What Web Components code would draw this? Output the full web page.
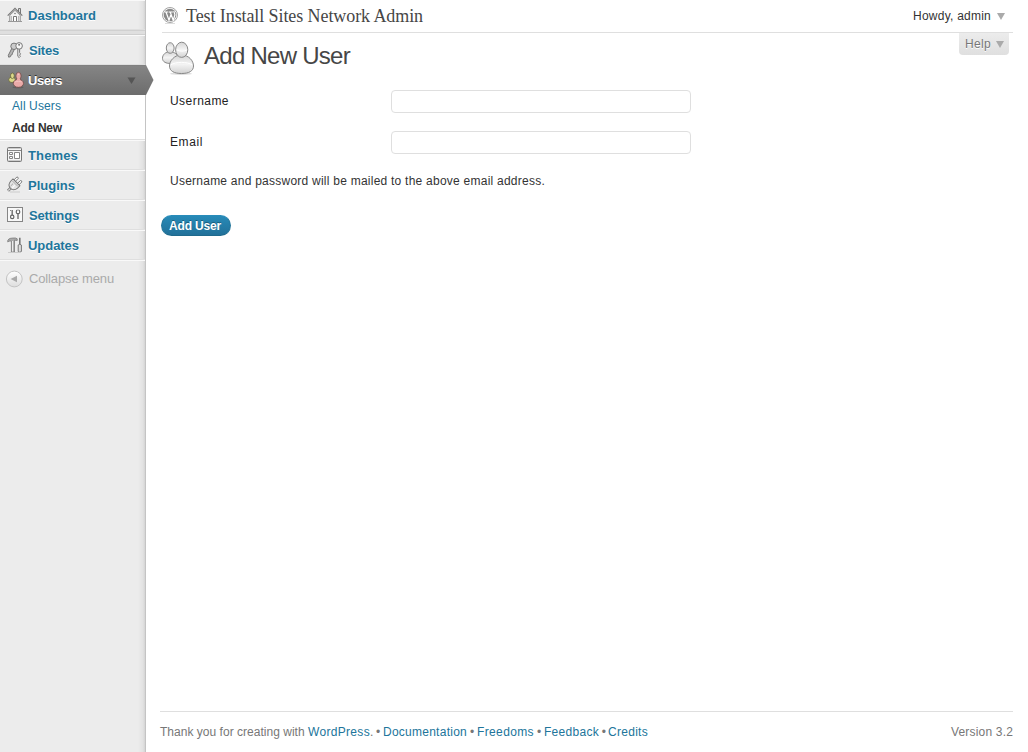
<!DOCTYPE html>
<html lang="en"><head><meta charset="utf-8"><title>Add New User</title>
<style>
html,body{margin:0;height:100%;background:#fff;overflow:hidden}
body{font:12px/18px "Liberation Sans",Arial,sans-serif;color:#333}
</style></head><body>
<admin-shell>
  <admin-menu slot="menu"></admin-menu>
  <admin-header slot="header"></admin-header>
  <user-form slot="main"></user-form>
  <admin-footer slot="footer"></admin-footer>
</admin-shell>
<script>
const define=(name,html,ready)=>customElements.define(name,class extends HTMLElement{
  constructor(){super();const t=document.createElement('template');t.innerHTML=html;
    this.attachShadow({mode:'open'}).append(t.content.cloneNode(true));}
  connectedCallback(){if(ready)ready.call(this);}
});

/* Tracks its text so that the line fills the width given in the w attribute. */
define('fit-text','<style>:host{display:inline-block;white-space:pre}span{display:inline-block}</style><span><slot></slot></span>',function(){
  const w=+this.getAttribute('w'),s=this.shadowRoot.querySelector('span'),n=this.textContent.length;
  if(!w)return;
  s.style.letterSpacing=((w-s.getBoundingClientRect().width)/n)+'px';
  this.style.width=w+'px';
});

const icons={
home:`<path d="M2.8 8.3 8 3.3l5.2 5V14.5H2.8z" fill="#f4f4f4" stroke="#8a8a8a"/><path d="M11.5 5V1.5h2V7" fill="#ddd" stroke="#777"/><path d="M.7 8.6 8 1.4 15.3 8.6" fill="none" stroke="#777" stroke-width="1.2"/><path d="M6.5 14.5V9.5h3v5" fill="#fff" stroke="#777"/><path d="M4.5 9v5M11.5 9v5" stroke="#bbb"/><circle cx="8" cy="6.5" r=".8" fill="#777"/><path d="M1 14.5h14" stroke="#999"/>`,
keys:`<path d="M5 6 1.3 13.3l.4 1.9 1.9-.6.3-1.5 1.3-.5.3-1.5L7.6 7" fill="#b5b5b5" stroke="#777"/><circle cx="7" cy="4.3" r="3.2" fill="#ccc" stroke="#777"/><path d="M10.8 6.5v7.8l1.4 1.3 1.2-1.3-.8-1.1.9-1.3-.9-1.2V6.5" fill="#eee" stroke="#777"/><circle cx="12.1" cy="3.9" r="3.3" fill="#f6f6f6" stroke="#777"/><circle cx="12.1" cy="2.8" r="1" fill="#777"/>`,
users:`<ellipse cx="11" cy="15.2" rx="5.5" ry="1" fill="#444" opacity=".4"/><g fill="#dcda8a" stroke="#5d5a35" stroke-width=".7"><ellipse cx="5" cy="7.8" rx="3.3" ry="2.7"/><ellipse cx="5.4" cy="3.8" rx="1.9" ry="2.8"/></g><g fill="#eaaaa8" stroke="#67413e" stroke-width=".7"><ellipse cx="11.4" cy="11.3" rx="5.1" ry="4"/><ellipse cx="11.5" cy="4" rx="2.6" ry="3.7"/></g><path d="M10 6.6h3v2h-3z" fill="#eaaaa8"/><path d="M8 10c2-1 4.8-1 6.8 0M10.8 2.5h1.4" fill="none" stroke="#f7c9c6" stroke-width=".8"/>`,
themes:`<rect x=".5" y=".5" width="14" height="14" rx="1" fill="#f6f6f6" stroke="#777"/><path d="M1 1.5h13" stroke="#ccc"/><path d="M1 3.5h13" stroke="#858585"/><path d="M2.5 5.5h3v2h-3zM2.5 9.5h3v2h-3zM7.5 5.5h5v6h-5z" fill="#fff" stroke="#858585"/><path d="M1 13.5h13" stroke="#ccc"/>`,
plug:`<path d="M3 15h10" stroke="#ccc"/><g transform="translate(7.8 7) rotate(45)"><path d="M0 5v4.6" stroke="#777" stroke-width="2.8"/><path d="M0 5v4.2" stroke="#ddd" stroke-width="1.2"/><path d="M-3.5-1v-5.4q1-1.2 2 0V-1M1.5-1v-5.4q1-1.2 2 0V-1" fill="#fff" stroke="#777" stroke-width=".9"/><path d="M-4.9-2.3h9.8V1C4.6 4 2.8 5.6 1.3 6h-2.6C-2.8 5.6-4.6 4-4.9 1z" fill="#e4e4e4" stroke="#777"/><path d="M-4-.5h8M-1.5 1v3.5" stroke="#999" stroke-width=".8"/><path d="M1 1v3.5" stroke="#fff"/></g>`,
settings:`<rect x=".5" y=".5" width="15" height="14" fill="#f8f8f8" stroke="#858585"/><path d="M5.2 3v5M11 7v5" stroke="#777" stroke-width="1.5"/><circle cx="5.2" cy="9.9" r="1.7" fill="#fff" stroke="#666" stroke-width="1.2"/><circle cx="11" cy="4.9" r="1.8" fill="#fff" stroke="#666" stroke-width="1.2"/><path d="M3 3.5h1" stroke="#888"/><path d="M11 2.5v1.8" stroke="#f8f8f8"/>`,
tools:`<path d="M.8 3.4C1.8 1.2 4 1 8.5 1l1.7.8v1.7l-2.7-.4v12H4.4v-11C3 4 2 4 .8 5z" fill="#aaa" stroke="#777" stroke-width=".8"/><path d="M5.6 4v10.5" stroke="#f4f4f4"/><path d="M12.8 .7V8" stroke="#777" stroke-width="1.6"/><path d="M11.2 8q1.6-1.5 3.2 0v6.5q-1.6 1.5-3.2 0z" fill="#ddd" stroke="#777"/><path d="M1 15.5h13" stroke="#ccc"/>`,
collapse:`<defs><linearGradient id="g" x2="0" y2="1"><stop stop-color="#fff"/><stop offset="1" stop-color="#ddd"/></linearGradient></defs><circle cx="8.3" cy="8" r="7.9" fill="url(#g)" stroke="#c4c4c4"/><path d="M11 4.7v6.6L4.6 8z" fill="#aaa"/>`
};
define('menu-icon','<style>:host{display:block;width:16px;height:16px}svg{display:block;overflow:visible}</style><svg width="16" height="16" viewBox="0 0 16 16"></svg>',function(){
  this.shadowRoot.querySelector('svg').innerHTML=icons[this.getAttribute('name')];
});
define('menu-item',`<style>
:host{display:flex;box-sizing:border-box;height:30px;align-items:center;padding:0 0 0 7px;border-top:1px solid #f9f9f9;border-bottom:1px solid #dfdfdf;color:#21759b;font-weight:bold;font-size:13px;text-shadow:0 1px 0 #fff;position:relative}
::slotted(menu-icon){width:21px!important;flex:none}
::slotted(fit-text){padding-top:2px}
:host([current]){background:linear-gradient(#858585,#6d6d6d);border-color:#808080 transparent #6d6d6d;color:#fff;text-shadow:0 -1px 0 #333}
.arrow{display:none}:host([current]) .arrow{display:block;position:absolute;left:145px;top:-1px}
.drop{display:none;margin-left:auto;margin-right:9px}:host([current]) .drop{display:block}
</style><slot></slot><svg class="drop" width="9" height="7"><path d="M.5 .5h8L4.5 7z" fill="#555"/></svg>
<svg class="arrow" width="9" height="30"><defs><linearGradient id="a" x2="0" y2="1"><stop stop-color="#858585"/><stop offset="1" stop-color="#6d6d6d"/></linearGradient></defs><path d="M0 0h1L8.5 15 1 30H0z" fill="url(#a)"/></svg>`);
const item=(icon,text,w,attr='',shift=0)=>`<menu-item ${attr}><menu-icon name="${icon}"></menu-icon><fit-text w="${w}" style="margin-left:${shift}px">${text}</fit-text></menu-item>`;
define('admin-menu',`<style>
:host{display:block;box-sizing:border-box;width:146px;height:752px;background:linear-gradient(90deg,transparent 138px,#e2e2e2 143px,#d4d4d4 145px,#c4c4c4 145px),#ececec}
nav{width:145px}.sep{box-sizing:border-box;height:5px;background:#dfdfdf;border-top:1px solid #d0d0d0;border-bottom:1px solid #cfcfcf}
.sub{height:44px;padding-left:12px;background:#fff;border-bottom:1px solid #dfdfdf;display:flex;flex-direction:column;line-height:22px;width:133px;color:#21759b}
.sub b{color:#333}
.fold{display:flex;align-items:center;height:36px;padding-left:6px;color:#aaa;font-size:13px;border-top:1px solid #f9f9f9}.fold menu-icon{width:23px}
</style><nav>
${item('home','Dashboard',68)}<div class="sep"></div>
${item('keys','Sites',30,'',1)}
${item('users','Users',34,'current')}
<div class="sub"><fit-text w="49">All Users</fit-text><b><fit-text w="50">Add New</fit-text></b></div>
${item('themes','Themes',50)}${item('plug','Plugins',47)}${item('settings','Settings',50,'',1)}${item('tools','Updates',51)}
<div class="fold"><menu-icon name="collapse"></menu-icon><fit-text w="85">Collapse menu</fit-text></div>
</nav>`);

define('down-arrow','<style>:host{display:block;height:7px}svg{display:block}</style><svg width="8" height="7"><path d="M0 0h8L4 7z" fill="#aaa"/></svg>');
define('admin-header',`<style>
:host{display:flex;height:32px;align-items:center;margin:0 15px 0 16px;border-bottom:1px solid #dfdfdf}
.logo{flex:none;width:16px;height:17px;margin:-2px 8px 0 0}
.title{font:18px/24px "Liberation Serif",serif;color:#464646}
.user{display:flex;align-items:center;margin-left:auto;gap:7px;margin-right:8px;color:#333}
</style>
<svg class="logo" viewBox="0 0 16 17"><path d="M3 16.5h10" stroke="#ddd"/><circle cx="8" cy="8" r="7.5" fill="#fff" stroke="#999" stroke-width=".9"/><circle cx="8" cy="8" r="6.3" fill="#8a8a8a"/><path d="M2.6 5h3.8M7 5h3.8M4 5l3 8.3L8.8 8M8.2 5l3 8.3 1.6-5c.6-2-1.2-2.6-.8-4.2" fill="none" stroke="#fff" stroke-width="1.2"/></svg>
<fit-text class="title" w="237">Test Install Sites Network Admin</fit-text>
<div class="user"><fit-text w="78" style="margin-right:-1px">Howdy, admin</fit-text><down-arrow></down-arrow></div>`);

define('form-row',`<style>
:host{display:flex;height:23px;align-items:center;color:#222}
.label{width:221px;flex:none;margin-top:-2px}input{box-sizing:border-box;width:300px;height:23px;border:1px solid #dfdfdf;border-radius:4px;background:#fff;padding:3px;outline:0;margin:0}
</style><div class="label"><slot></slot></div><input>`);
define('user-form',`<style>
:host{display:block;height:678px}
.top{display:flex;height:57px;margin:0 19px 0 15px}.people{margin:7px 9px 0 0;flex:none}
.heading{font-size:24px;line-height:30px;color:#464646;margin-top:8px}
.help{display:flex;align-items:center;justify-content:flex-end;box-sizing:border-box;width:50px;height:22px;margin-left:auto;padding-right:5px;gap:5px;color:#777;background:linear-gradient(#ececec,#dfdfdf);border-radius:0 0 4px 4px;text-shadow:0 1px 0 #fff}
.fields{display:grid;gap:18px;padding-left:24px}.note{padding-left:24px;margin-top:18px}
button{display:flex;align-items:center;justify-content:center;width:70px;height:21px;box-sizing:border-box;margin:25px 0 0 15px;padding:0 2px 0 0;border:1px solid #21759b;border-color:#298cba #21759b #1e6a8d;border-radius:11px;background:linear-gradient(#278ab7,#22719a);color:#fff;font:bold 12px/18px "Liberation Sans",Arial,sans-serif;text-shadow:0 -1px 0 rgba(0,0,0,.3)}
</style>
<div class="top"><svg class="people" width="34" height="35" viewBox="0 0 34 35"><defs><linearGradient id="p" x2="0" y2="1"><stop stop-color="#d4d4d4"/><stop offset=".5" stop-color="#f4f4f4"/><stop offset="1" stop-color="#d2d2d2"/></linearGradient></defs><ellipse cx="20" cy="33.7" rx="11" ry="1.2" fill="#ddd"/><g fill="url(#p)" stroke="#888"><path d="M1.5 18.3c0-3.6 3-6.6 7.5-6.6s8 3 8 6.6-3 5.2-7.5 5.2-8-1.6-8-5.2z"/><ellipse cx="9.2" cy="8" rx="3.9" ry="5.3"/><path d="M8.5 26c0-5 4.5-11 12-11s12 6 12 11-4.5 7.5-12 7.5-12-2.5-12-7.5z"/><ellipse cx="20.7" cy="9.8" rx="6.1" ry="7.6"/></g><path d="M9.8 25c4-3.5 17.4-3.5 21.4 0M16 10c3 1.5 7 1.5 10 0" fill="none" stroke="#fff"/></svg>
<fit-text class="heading" w="146">Add New User</fit-text><div class="help"><fit-text w="26">Help</fit-text><down-arrow></down-arrow></div></div>
<div class="fields"><form-row><fit-text w="59">Username</fit-text></form-row><form-row><fit-text w="33">Email</fit-text></form-row></div>
<div class="note"><fit-text w="375">Username and password will be mailed to the above email address.</fit-text></div>
<button><fit-text w="52">Add User</fit-text></button>`);

define('admin-footer',`<style>
:host{display:flex;height:39px;margin:0 15px 0 14px;border-top:1px solid #dfdfdf;align-items:center;color:#777}
a{color:#21759b}.version{margin-left:auto}
</style><fit-text w="148">Thank you for creating with </fit-text><a><fit-text w="62">WordPress</fit-text></a><fit-text w="13">. • </fit-text><a><fit-text w="84">Documentation</fit-text></a><fit-text w="10"> • </fit-text><a><fit-text w="57">Freedoms</fit-text></a><fit-text w="10"> • </fit-text><a><fit-text w="55">Feedback</fit-text></a><fit-text w="9"> • </fit-text><a><fit-text w="40">Credits</fit-text></a><fit-text class="version" w="62">Version 3.2</fit-text>`);
define('admin-shell',`<style>:host{display:grid;grid-template-columns:146px 1fr;height:752px}main{display:flex;flex-direction:column}</style><slot name="menu"></slot><main><slot name="header"></slot><slot name="main"></slot><slot name="footer"></slot></main>`);
</script></body></html>
